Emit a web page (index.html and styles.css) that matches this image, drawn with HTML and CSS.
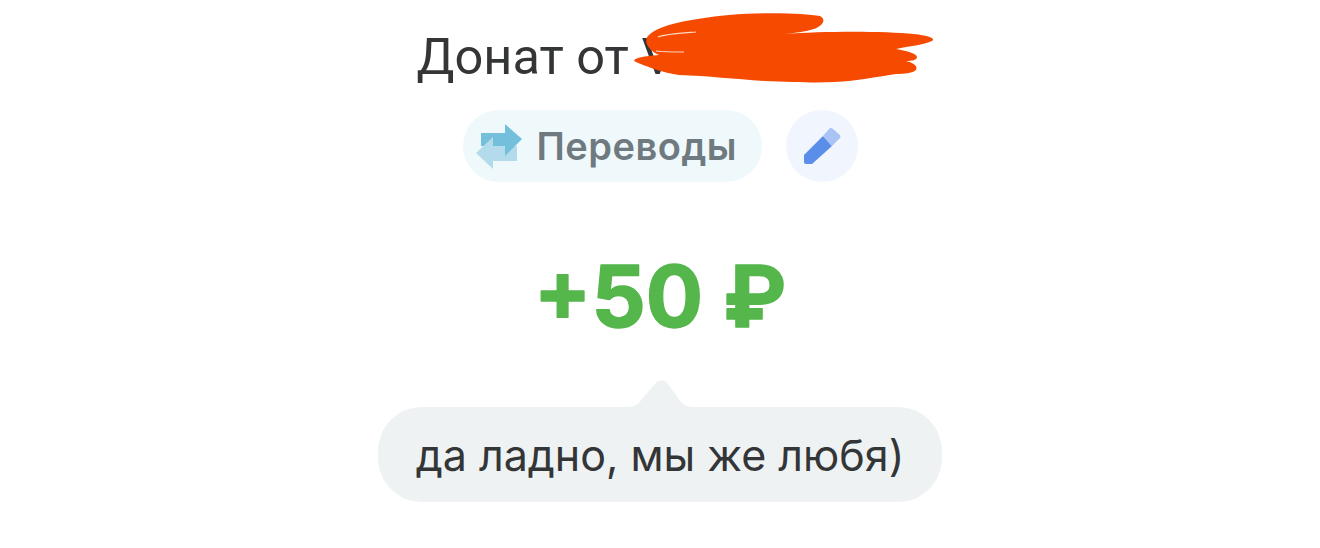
FILE: index.html
```html
<!DOCTYPE html>
<html lang="ru">

<head>
    <meta charset="UTF-8">
    <meta name="viewport" content="width=device-width, initial-scale=1.0">
    <title>Донат</title>

    <link rel="stylesheet" href="styles.css">
</head>

<body>

    <header class="title">
        <h1 class="title-text">Донат от <span class="name">V</span></h1>

        <!-- закрашенное имя -->
        <svg class="scribble" width="300" height="72" viewBox="0 0 300 72">
            <path d="M15 24 C25 14 55 8 95 4 C130 1 170 2 186 5 C192 8 190 14 180 18 C170 21 160 22 150 23 C190 20 250 20 280 23 C295 25 302 27 298 30 C290 34 275 35 262 38 C272 40 282 42 283 46 C283 49 278 50 272 50 C280 52 284 55 282 59 C279 62 270 63 262 63 C240 66 225 70 200 71 C180 72 160 71 130 70 C100 68 75 65 45 64 C30 62 10 55 0 50 C0 47 10 45 25 44 C15 40 8 30 15 24 Z" fill="#f64a00" />
            <path d="M24 26 C32 23 50 22 62 21" stroke="#fbd7c4" stroke-width="1.2" fill="none" />
            <path d="M22 40 C30 41 40 41 50 41" stroke="#fbd7c4" stroke-width="1" fill="none" />
        </svg>
    </header>

    <section class="tags">

        <div class="tag">
            <svg class="tag-icon" width="48" height="50" viewBox="0 0 48 50">
                <path d="M18 25 H42 V40 H18 Z" fill="#b3dbeb" />
                <path d="M6 12 H30 V3 L47 18 L30 35 V25 H6 Z" fill="#74bfdc" />
                <path d="M1 32 L18 16 V25 H24 V40 H18 V48 Z" fill="#b3dbeb" />
            </svg>
            <span class="tag-text">Переводы</span>
        </div>

        <button class="edit">
            <svg width="40" height="40" viewBox="0 0 40 40">
                <path d="M2 29 L21 10 L30 20 L10 38 L4 38 Q2 38 2 36 Z" fill="#5b8ee8" />
                <path d="M21 10 L27 3 Q29 1 31 3 L38 9 Q39 11 38 12 L30 20 Z" fill="#a9c3f5" />
            </svg>
        </button>

    </section>

    <svg class="amount" width="300" height="110" viewBox="0 0 300 110">
        <text class="amount-text" x="150" y="85">+50 ₽</text>
    </svg>

    <div class="bubble">
        <svg class="bubble-tip" width="70" height="30" viewBox="0 0 70 30">
            <path d="M0 28 C8 28 11 24 15 19 L27 5 C31 0 36 0 40 5 L50 19 C54 25 58 28 66 28 L66 30 L0 30 Z" fill="#eef2f3" />
        </svg>
        <p class="bubble-text">да ладно, мы же любя)</p>
    </div>

</body>

</html>
```

FILE: styles.css
```css
* {
    margin: 0;
    padding: 0;
    box-sizing: border-box;
}

body {
    height: 548px;
    overflow: hidden;
    background-color: #fff;
    color: #333537;
    font-family: "Inter", "Liberation Sans", sans-serif;
    display: flex;
    flex-direction: column;
    align-items: center;
}

.title {
    position: relative;
    height: 110px;
    padding-top: 28px;
    width: 100%;
    display: flex;
    justify-content: center;
}

.title-text {
    font-family: "Roboto", sans-serif;
    font-size: 50.5px;
    font-weight: 400;
    line-height: 58px;
    white-space: nowrap;
}

.name {
    display: inline-block;
    width: 262px;
}

.scribble {
    position: absolute;
    left: 634px;
    top: 11px;
}

.tags {
    display: flex;
    gap: 24px;
}

.tag {
    width: 299px;
    height: 72px;
    border-radius: 36px;
    background-color: #eff9fb;
    display: flex;
    align-items: center;
    gap: 14px;
    padding-left: 12px;
}

.tag-text {
    font-size: 38px;
    font-weight: 600;
    letter-spacing: 0.5px;
    color: #6f7a80;
}

.edit {
    width: 72px;
    height: 72px;
    border: none;
    border-radius: 50%;
    background-color: #f1f5fe;
    display: flex;
    align-items: center;
    justify-content: center;
}

.amount {
    margin-top: 60px;
}

.amount-text {
    font-size: 85px;
    font-weight: 700;
    text-anchor: middle;
    fill: #54b64b;
    stroke: #54b64b;
    stroke-width: 1.5px;
    stroke-linejoin: round;
}

.bubble {
    position: relative;
    margin-top: 55px;
    width: 564px;
    height: 95px;
    border-radius: 44px;
    background-color: #eef2f3;
    display: flex;
    align-items: center;
    justify-content: center;
}

.bubble-tip {
    position: absolute;
    left: 250px;
    top: -28px;
}

.bubble-text {
    font-size: 43px;
    color: #333537;
    white-space: nowrap;
}
```
